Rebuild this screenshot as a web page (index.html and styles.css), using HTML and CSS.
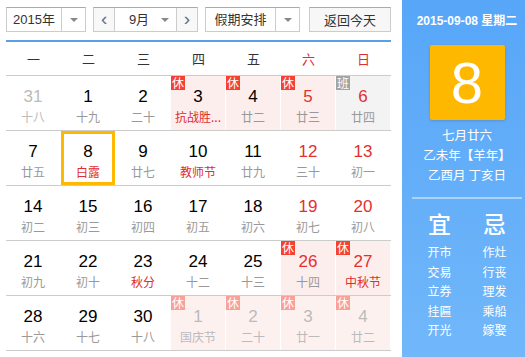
FILE: index.html
```html
<!DOCTYPE html>
<html lang="zh-CN">
<head>
    <meta charset="UTF-8">
    <meta name="viewport" content="width=device-width, initial-scale=1.0">
    <title>万年历</title>
    <link rel="stylesheet" href="styles.css">
</head>
<body>
    <div class="calendar">
        <div class="main">
            <div class="toolbar">
                <div class="select year-select">
                    <span class="select-text">2015年</span>
                    <span class="select-arrow"></span>
                </div>
                <div class="select month-select">
                    <span class="nav-btn">&lsaquo;</span>
                    <span class="select-text">9月</span>
                    <span class="select-arrow inline"></span>
                    <span class="nav-btn right">&rsaquo;</span>
                </div>
                <div class="select holiday-select">
                    <span class="select-text">假期安排</span>
                    <span class="select-arrow"></span>
                </div>
                <div class="today-btn">返回今天</div>
            </div>

            <div class="weekdays">
                <span>一</span>
                <span>二</span>
                <span>三</span>
                <span>四</span>
                <span>五</span>
                <span class="weekend">六</span>
                <span class="weekend">日</span>
            </div>

            <div class="week">
                <div class="day other"><b>31</b><i>十八</i></div>
                <div class="day"><b>1</b><i>十九</i></div>
                <div class="day"><b>2</b><i>二十</i></div>
                <div class="day rest"><em class="badge">休</em><b>3</b><i class="fest">抗战胜...</i></div>
                <div class="day rest"><em class="badge">休</em><b>4</b><i>廿二</i></div>
                <div class="day rest weekend"><em class="badge">休</em><b>5</b><i>廿三</i></div>
                <div class="day work weekend"><em class="badge">班</em><b>6</b><i>廿四</i></div>
            </div>
            <div class="week">
                <div class="day"><b>7</b><i>廿五</i></div>
                <div class="day selected"><b>8</b><i class="fest">白露</i></div>
                <div class="day"><b>9</b><i>廿七</i></div>
                <div class="day"><b>10</b><i class="fest">教师节</i></div>
                <div class="day"><b>11</b><i>廿九</i></div>
                <div class="day weekend"><b>12</b><i>三十</i></div>
                <div class="day weekend"><b>13</b><i>初一</i></div>
            </div>
            <div class="week">
                <div class="day"><b>14</b><i>初二</i></div>
                <div class="day"><b>15</b><i>初三</i></div>
                <div class="day"><b>16</b><i>初四</i></div>
                <div class="day"><b>17</b><i>初五</i></div>
                <div class="day"><b>18</b><i>初六</i></div>
                <div class="day weekend"><b>19</b><i>初七</i></div>
                <div class="day weekend"><b>20</b><i>初八</i></div>
            </div>
            <div class="week">
                <div class="day"><b>21</b><i>初九</i></div>
                <div class="day"><b>22</b><i>初十</i></div>
                <div class="day"><b>23</b><i class="fest">秋分</i></div>
                <div class="day"><b>24</b><i>十二</i></div>
                <div class="day"><b>25</b><i>十三</i></div>
                <div class="day rest weekend"><em class="badge">休</em><b>26</b><i>十四</i></div>
                <div class="day rest weekend"><em class="badge">休</em><b>27</b><i class="fest">中秋节</i></div>
            </div>
            <div class="week">
                <div class="day"><b>28</b><i>十六</i></div>
                <div class="day"><b>29</b><i>十七</i></div>
                <div class="day"><b>30</b><i>十八</i></div>
                <div class="day rest other"><em class="badge">休</em><b>1</b><i>国庆节</i></div>
                <div class="day rest other"><em class="badge">休</em><b>2</b><i>二十</i></div>
                <div class="day rest other"><em class="badge">休</em><b>3</b><i>廿一</i></div>
                <div class="day rest other"><em class="badge">休</em><b>4</b><i>廿二</i></div>
            </div>
        </div>

        <div class="side">
            <div class="side-date">2015-09-08 星期二</div>
            <div class="big-day">8</div>
            <div class="lunar">
                <p>七月廿六</p>
                <p>乙未年【羊年】</p>
                <p>乙酉月 丁亥日</p>
            </div>
            <div class="almanac">
                <div class="almanac-col">
                    <h3>宜</h3>
                    <p>开市</p>
                    <p>交易</p>
                    <p>立券</p>
                    <p>挂匾</p>
                    <p>开光</p>
                </div>
                <div class="almanac-col">
                    <h3>忌</h3>
                    <p>作灶</p>
                    <p>行丧</p>
                    <p>理发</p>
                    <p>乘船</p>
                    <p>嫁娶</p>
                </div>
            </div>
        </div>
    </div>
</body>
</html>
```

FILE: styles.css
```css
* {
    box-sizing: border-box;
}

body {
    margin: 0;
    font-family: 'Liberation Sans', 'Noto Sans CJK SC', sans-serif;
    color: #333;
    background: #fff;
}

.calendar {
    display: flex;
    width: 525px;
    height: 357px;
    overflow: hidden;
}

.main {
    width: 385px;
    margin: 0 11px 0 6px;
}

/* toolbar */
.toolbar {
    display: flex;
    height: 42px;
    padding-top: 7px;
    border-bottom: 2px solid #5b9ee3;
}

.select,
.today-btn {
    display: flex;
    align-items: center;
    height: 25px;
    border: 1px solid #ccc;
    border-top-color: #aaa;
    font-size: 13px;
    background: #fff;
}

.year-select {
    width: 80px;
}

.year-select .select-text {
    width: 55px;
}

.month-select {
    width: 105px;
    margin-left: 7px;
}

.holiday-select {
    width: 95px;
    margin-left: 7px;
}

.holiday-select .select-text {
    width: 70px;
}

.select-text {
    text-align: center;
    height: 100%;
    line-height: 23px;
    border-right: 1px solid #ccc;
}

.select-arrow {
    flex: 1;
    height: 100%;
    position: relative;
}

.select-arrow::after {
    content: '';
    position: absolute;
    left: 50%;
    top: 10px;
    margin-left: -4px;
    border-left: 4px solid transparent;
    border-right: 4px solid transparent;
    border-top: 4px solid #888;
}

.month-select .select-text {
    width: 40px;
    border-right: none;
    padding-left: 8px;
}

.select-arrow.inline {
    width: 21px;
    flex: none;
}

.nav-btn {
    width: 22px;
    height: 100%;
    text-align: center;
    line-height: 21px;
    font-size: 19px;
    color: #5c6e8f;
    background: #f8f8f8;
    border-right: 1px solid #ccc;
}

.nav-btn.right {
    border-right: none;
    border-left: 1px solid #ccc;
    margin-left: auto;
}

.today-btn {
    width: 82px;
    margin-left: 9px;
    justify-content: center;
    background: #f7f7f7;
}

/* weeks */
.weekdays {
    display: grid;
    grid-template-columns: repeat(7, 55px);
    height: 34px;
    border-bottom: 1px solid #ccc;
    font-size: 13px;
    line-height: 36px;
    text-align: center;
}

.weekdays .weekend {
    color: #e02d2d;
}

.week {
    display: grid;
    grid-template-columns: repeat(7, 55px);
    border-bottom: 1px solid #ccc;
}

.day {
    position: relative;
    height: 54px;
    padding-top: 12px;
    text-align: center;
    border-right: 1px solid transparent;
    background-clip: padding-box;
}

.day b {
    display: block;
    height: 18px;
    font-size: 17px;
    line-height: 18px;
    font-weight: normal;
    color: #000;
}

.day i {
    display: block;
    height: 19px;
    margin-top: 1px;
    font-size: 12px;
    line-height: 19px;
    font-style: normal;
    color: #999;
    font-family: 'Noto Sans CJK SC', sans-serif;
    white-space: nowrap;
}

.day i.fest {
    color: #e02d2d;
}

.day.weekend b {
    color: #e4302e;
}

.day.other b,
.day.other i {
    color: #bbb;
}

.rest {
    background-color: #fdeeee;
}

.work {
    background-color: #f3f3f3;
}

.badge {
    position: absolute;
    top: 0;
    left: 0;
    width: 14px;
    height: 14px;
    font-size: 12px;
    line-height: 14px;
    font-style: normal;
    color: #fff;
    background: #f5412f;
    font-family: 'Noto Sans CJK SC', sans-serif;
}

.work .badge {
    background: #a3a3a3;
}

.other .badge {
    background: #f9a097;
}

.other.rest {
    background-color: #fdf1f0;
}

.selected {
    box-shadow: inset 0 0 0 3px #ffb800;
}

/* side panel */
.side {
    width: 123px;
    height: 357px;
    padding: 0 3px 0 10px;
    background: linear-gradient(#57a6f8, #71b7fa);
    color: #fff;
    text-align: center;
    font-family: 'Noto Sans CJK SC', sans-serif;
}

.side-date {
    padding-top: 11px;
    height: 45px;
    font-size: 12px;
    font-weight: bold;
    font-family: 'Liberation Sans', 'Noto Sans CJK SC', sans-serif;
    white-space: nowrap;
}

.big-day {
    width: 75px;
    height: 75px;
    margin: 0 auto;
    background: #ffb800;
    border-radius: 2px;
    box-shadow: 0 1px 3px rgba(0, 0, 0, 0.15);
    font-family: 'Liberation Sans', sans-serif;
    font-size: 58px;
    line-height: 75px;
}

.lunar {
    padding: 5px 0 12px;
    border-bottom: 2px solid rgba(255, 255, 255, 0.45);
}

.lunar p {
    margin: 0;
    font-size: 12.5px;
    line-height: 20px;
    white-space: nowrap;
}

.almanac {
    display: flex;
}

.almanac-col {
    width: 55px;
}

.almanac h3 {
    margin: 11px 0 6px;
    font-size: 23px;
    line-height: 26px;
    font-weight: 500;
}

.almanac p {
    margin: 0;
    font-size: 12px;
    line-height: 19.5px;
}
```
